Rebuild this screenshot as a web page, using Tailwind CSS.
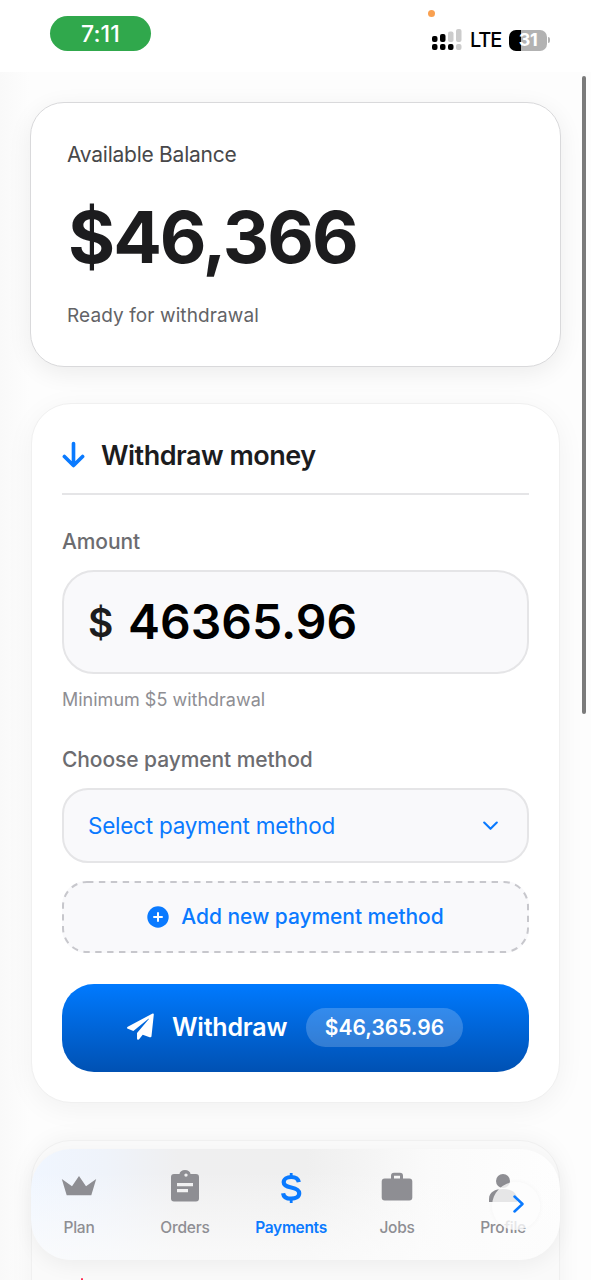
<!DOCTYPE html>
<html lang="en">
<head>
<meta charset="utf-8">
<title>Payments</title>
<script src="https://cdn.jsdelivr.net/npm/@tailwindcss/browser@4"></script>
</head>
<body class="relative flex h-[1280px] w-[591px] flex-col overflow-hidden bg-white font-['Inter',sans-serif]">
  <header class="flex h-[72px] shrink-0 items-start justify-between pl-[50px] pr-[41px]">
    <div class="mt-4 flex h-[35px] w-[101px] items-center justify-center rounded-full bg-[#30a84c] pt-px text-[23px] font-medium leading-none tracking-[0.2px] text-white">7:11</div>
    <div class="relative mt-[29px] flex h-[22px] items-center">
      <span class="absolute -left-[4px] -top-[19px] size-[7px] rounded-full bg-[#f9a050]"></span>
      <svg class="h-[22px] w-[30px]" viewBox="0 0 30 22">
        <g fill="#000"><rect x="0" y="7" width="5.5" height="6" rx="2"/><rect x="8" y="5" width="5.5" height="8" rx="2"/><rect x="0" y="15" width="5.5" height="6" rx="2"/><rect x="8" y="15" width="5.5" height="6" rx="2"/><rect x="16" y="15" width="5.5" height="6" rx="2"/></g>
        <g fill="#ccc"><rect x="16" y="2.500" width="5.500" height="10.500" rx="2"/><rect x="24" y="0" width="5.500" height="13" rx="2"/><rect x="24" y="15" width="5.500" height="6" rx="2"/></g>
      </svg>
      <span class="ml-2 w-[31px] text-[20px] font-medium leading-none tracking-[-1.1px] text-black">LTE</span>
      <div class="ml-2 flex h-[21px] w-[38px] items-center justify-center rounded-[7px] bg-linear-to-r from-black from-[31%] to-[#b2b2b2] to-[31%] text-[18px] font-bold leading-none tracking-[-0.4px] text-white">31</div>
      <span class="ml-[1px] h-[6px] w-[2px] rounded-r-full bg-[#b2b2b2]"></span>
    </div>
  </header>

  <main class="flex grow flex-col bg-linear-to-r from-[#f9f9f9] via-[#fdfdfd] via-5% to-[#fdfdfd] px-[31px] pt-[30px]">
    <section class="-mx-px -mt-[0.5px] flex h-[265.5px] shrink-0 flex-col rounded-[34px] border border-[#d9d9db] bg-white px-[36px] pt-[38px] shadow-[0_6px_24px_rgba(0,0,0,0.07)]">
      <p class="text-[21px] leading-[28px] text-[#48484a]"><span class="tracking-[-0.25px]">Available Balance</span></p>
      <p class="mt-[22.5px] pl-px text-[72px] font-bold leading-[92px] text-[#1c1c1e]"><span class="tracking-[-2px]">$46,366</span></p>
      <p class="mt-[19px] text-[19px] leading-[28px] text-[#636366]"><span class="tracking-[0.1px]">Ready for withdrawal</span></p>
    </section>

    <section class="mt-[36px] flex h-[700px] shrink-0 flex-col rounded-[40px] border border-[#f0f0f0] bg-white px-[30px] shadow-[0_6px_28px_rgba(0,0,0,0.05)]">
      <div class="flex h-[91px] items-center gap-[16px] border-b-2 border-[#e5e5e7] pt-[13px]">
        <svg class="-mt-px h-[27px] w-[23px]" viewBox="0 0 24 28" fill="none" stroke="#0a7aff" stroke-width="3.800" stroke-linecap="round" stroke-linejoin="round"><path d="M12 2.500v23M2.500 16l9.500 9.500 9.500-9.500"/></svg>
        <h2 class="pt-[2px] text-[27px] font-semibold leading-[36px] text-[#1c1c1e]"><span class="tracking-[-0.5px]">Withdraw money</span></h2>
      </div>
      <p class="mt-[33px] text-[21px] font-medium leading-[28px] text-[#6c6c70]"><span class="tracking-[-0.1px]">Amount</span></p>
      <div class="mt-[14px] flex h-[104px] items-center rounded-[32px] border-2 border-[#e5e5e7] bg-[#f9f9fb] pl-[24px]">
        <span class="w-[40px] pt-[2px] text-[39px] font-semibold text-[#1c1c1e]">$</span>
        <span class="text-[48px] font-semibold leading-none text-black">46365.96</span>
      </div>
      <p class="mt-[12px] text-[18px] leading-[28px] text-[#8e8e93]"><span>Minimum $5 withdrawal</span></p>
      <p class="mt-[32px] text-[21px] font-medium leading-[28px] text-[#6c6c70]"><span class="tracking-[-0.08px]">Choose payment method</span></p>
      <div class="mt-[14px] flex h-[75px] items-center justify-between rounded-[26px] border-2 border-[#e5e5e7] bg-[#f9f9fb] pl-[24px] pr-[29px]">
        <span class="pt-px text-[22.5px] tracking-[-0.25px] text-[#0a7aff]">Select payment method</span>
        <svg class="h-[10px] w-[15px]" viewBox="0 0 15 10" fill="none" stroke="#0a7aff" stroke-width="2.100" stroke-linecap="round" stroke-linejoin="round"><path d="M1.200 1.500l6.300 6.300 6.300-6.300"/></svg>
      </div>
      <div class="relative mt-[18px] flex h-[72px] items-center justify-center gap-[12px] rounded-[24px] bg-[#f9f9fb]">
        <svg class="absolute inset-0 h-full w-full" viewBox="0 0 467 72" preserveAspectRatio="none" fill="none"><rect x="1" y="1" width="465" height="70" rx="24" stroke="#c7c7cc" stroke-width="2" stroke-dasharray="6.400 5.500"/></svg>
        <svg class="size-[22px]" viewBox="0 0 22 22"><circle cx="11" cy="11" r="10.700" fill="#0a7aff"/><path d="M11 7v8M7 11h8" stroke="#fff" stroke-width="2" stroke-linecap="round"/></svg>
        <span class="text-[21px] font-medium tracking-[-0.06px] text-[#0a7aff]">Add new payment method</span>
      </div>
      <div class="mt-[30.5px] flex h-[88px] items-center rounded-[32px] bg-linear-to-b from-[#007aff] to-[#0051b3] pl-[65px] text-white">
        <svg class="-mt-[3px] size-[27px]" viewBox="0 0 28 28" fill="#fff"><path d="M26.600.500c.800-.300 1.300.200 1.200 1L25.400 24c-.100 1-1 1.400-1.900 1.100l-7.200-2.600-3.700 4.700c-.700.900-2.200.500-2.200-.800v-5.700L22.500 6.600c.400-.500-.100-.900-.600-.500L6.600 18.600.900 16.400c-1.100-.400-1.200-1.700-.100-2.200z"/></svg>
        <span class="ml-[18px] w-[134px] pt-px text-[25px] font-semibold tracking-[-0.2px]">Withdraw</span>
        <span class="flex h-[39px] w-[157px] items-center justify-center rounded-full bg-white/20 pt-px text-[21px] font-semibold">$46,365.96</span>
      </div>
    </section>

    <section class="mt-[37px] flex h-[180px] shrink-0 flex-col rounded-t-[40px] border border-[#f0f0f0] bg-[#fafafa] shadow-[0_0_24px_rgba(0,0,0,0.05)]">
      <span class="ml-[49px] mt-[137px] h-[3px] w-[2px] shrink-0 rounded-t bg-[#ff2d55]"></span>
    </section>
  </main>

  <div class="absolute left-[582px] top-[76px] h-[638px] w-[4px] rounded-full bg-[#7b7b7b]"></div>

  <nav class="absolute left-[31px] top-[1149px] h-[111px] w-[529px] rounded-[40px] bg-[linear-gradient(180deg,transparent_20%,rgba(252,252,252,0.75)_95%),linear-gradient(90deg,#f0f6ff_0%,#eff3fa_14%,#efeff0_28%,#efefef_52%,#fafafa_75%,#fefefe_100%)] text-[15.500px] font-medium text-[#8e8e93] shadow-[0_6px_20px_rgba(0,0,0,0.05)]">
    <div class="-ml-[5px] grid grid-cols-5 pr-[4px]">
      <div class="flex flex-col items-center pt-[20px]">
        <svg class="h-[36px] w-[36px]" viewBox="0 0 36 36" fill="#8e8e93"><path d="M.800 10l10.200 7.200L18 7l7 10.200L35.200 10l-4.900 16.300H5.700z"/></svg>
        <span class="mt-[13px] leading-[20px] tracking-[-0.2px]">Plan</span>
      </div>
      <div class="flex flex-col items-center pt-[20px]">
        <svg class="h-[36px] w-[36px]" viewBox="0 0 36 36"><path fill="#8e8e93" fill-rule="evenodd" d="M7 5h5.500a5.500 4 0 0 1 11 0H29a3 3 0 0 1 3 3v21.500a3 3 0 0 1-3 3H7a3 3 0 0 1-3-3V8a3 3 0 0 1 3-3zM19 4.400a1.700 1.700 0 1 0 0 3.400A1.700 1.700 0 0 0 19 4.400zM10 14v3.200h16V14zm0 6v3.200h11V20z"/></svg>
        <span class="mt-[13px] leading-[20px] tracking-[-0.2px]">Orders</span>
      </div>
      <div class="flex flex-col items-center pt-[20px] font-semibold text-[#0a7aff]">
        <svg class="h-[36px] w-[36px]" viewBox="0 0 36 36" fill="none" stroke="#0a7aff"><path stroke-width="4.200" d="M25.800 13.200C25.200 9.800 22.300 8 18.200 8s-7.500 2-7.500 5.200c0 3.600 3.400 4.500 7.500 5.300 4.500.900 8 2 8 5.800 0 3.500-3.500 5.400-8 5.400s-7.700-1.900-8.100-5.500"/><path stroke-width="2.800" d="M18.200 4v4M18.200 30v4"/></svg>
        <span class="mt-[13px] leading-[20px] tracking-[-0.3px]">Payments</span>
      </div>
      <div class="flex flex-col items-center pt-[20px]">
        <svg class="h-[36px] w-[36px]" viewBox="0 0 36 36"><path fill="#8e8e93" fill-rule="evenodd" d="M12 9.500V6.700a3 3 0 0 1 3-3h6a3 3 0 0 1 3 3v2.800h6.300a3 3 0 0 1 3 3v16a3 3 0 0 1-3 3H5.700a3 3 0 0 1-3-3v-16a3 3 0 0 1 3-3zm3 0h6V6.700h-6z"/></svg>
        <span class="mt-[13px] leading-[20px] tracking-[-0.3px]">Jobs</span>
      </div>
      <div class="flex flex-col items-center pt-[20px]">
        <svg class="h-[36px] w-[36px]" viewBox="0 0 36 36" fill="#8e8e93"><circle cx="18" cy="12" r="7"/><path d="M4 33v-3c0-7 6-10 14-10s14 3 14 10v3z"/></svg>
        <span class="mt-[13px] leading-[20px] tracking-[-0.3px]">Profile</span>
      </div>
    </div>
    <div class="absolute left-[461px] top-[33px] flex size-[48px] items-center justify-center rounded-full bg-[#fdfdfd]/80 shadow-[0_0_5px_rgba(0,0,0,0.04)]">
      <svg class="-mt-[5px] ml-[5px] h-[18px] w-[11px]" viewBox="0 0 11 18" fill="none" stroke="#0a7aff" stroke-width="2.500" stroke-linecap="round" stroke-linejoin="round"><path d="M1.500 1.500L9.500 9l-8 7.500"/></svg>
    </div>
  </nav>
</body>
</html>
